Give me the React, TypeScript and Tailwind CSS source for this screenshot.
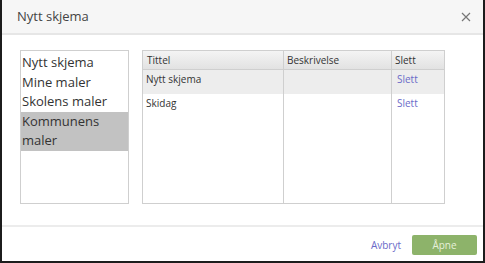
import React from 'react';

const lists = ['Nytt skjema', 'Mine maler', 'Skolens maler', 'Kommunens maler'];

const rows = [
  { title: 'Nytt skjema', desc: '', bg: 'bg-[#ededed]' },
  { title: 'Skidag', desc: '', bg: 'bg-white' },
];

const App = () => {
  return (
    <div className="w-[485px] h-[263px] bg-[#1c1c1c] pl-[2px] pr-[2px] pb-[2px] font-['Open_Sans',sans-serif]">
      <div className="w-full h-full bg-white flex flex-col">
        <div className="h-[35px] bg-[#f6f6f6] border-b-2 border-[#e6e6e6] flex items-center justify-between pl-[15px] pr-[12px]">
          <span className="text-[13px] text-[#444]">Nytt skjema</span>
          <svg width="10" height="10" viewBox="0 0 10 10" className="text-[#777]">
            <path d="M1 1 L9 9 M9 1 L1 9" stroke="currentColor" strokeWidth="1.2" />
          </svg>
        </div>

        <div className="flex gap-[13px] pl-[18px] pt-[15px] h-[190px]">
          <div className="w-[109px] h-[154px] border border-[#cfcfcf] flex flex-col pt-[2px]">
            {lists.map((l, i) => (
              <div
                key={l}
                className={`px-[1px] text-[13px] leading-[19.5px] text-[#333] ${i === 3 ? 'bg-[#c2c2c2] w-[72px] min-w-full' : ''}`}
              >
                {l}
              </div>
            ))}
          </div>

          <div className="w-[303px] h-[154px] border border-[#cfcfcf] flex flex-col text-[10px] text-[#333]">
            <div className="flex h-[19px] bg-gradient-to-b from-[#f4f4f4] to-[#e2e2e2] border-b border-[#cfcfcf]">
              <div className="w-[141px] border-r border-[#cfcfcf] px-[4px] flex items-center">Tittel</div>
              <div className="w-[108px] border-r border-[#cfcfcf] px-[3px] flex items-center">Beskrivelse</div>
              <div className="flex-1 px-[3px] flex items-center">Slett</div>
            </div>
            <div className="flex flex-1">
              <div className="w-[141px] border-r border-[#cfcfcf] flex flex-col">
                {rows.map(r => (
                  <div key={r.title} className={`h-[24px] px-[3px] pt-[2px] ${r.bg}`}>{r.title}</div>
                ))}
              </div>
              <div className="w-[108px] border-r border-[#cfcfcf] flex flex-col">
                {rows.map(r => (
                  <div key={r.title} className={`h-[24px] ${r.bg}`}>{r.desc}</div>
                ))}
              </div>
              <div className="flex-1 flex flex-col">
                {rows.map(r => (
                  <div key={r.title} className={`h-[24px] px-[5px] pt-[2px] text-[#6a6ac8] ${r.bg}`}>Slett</div>
                ))}
              </div>
            </div>
          </div>
        </div>

        <div className="border-t-2 border-[#ececec] flex-1 flex items-center justify-end gap-[11px] pr-[6px] pt-[2px]">
          <span className="text-[10px] text-[#6a6ac8]">Avbryt</span>
          <div className="w-[65px] h-[20px] rounded-[2px] bg-[#8db36a] text-[#e6f0da] text-[10px] flex items-center justify-center">
            Åpne
          </div>
        </div>
      </div>
    </div>
  );
};

export default App;
